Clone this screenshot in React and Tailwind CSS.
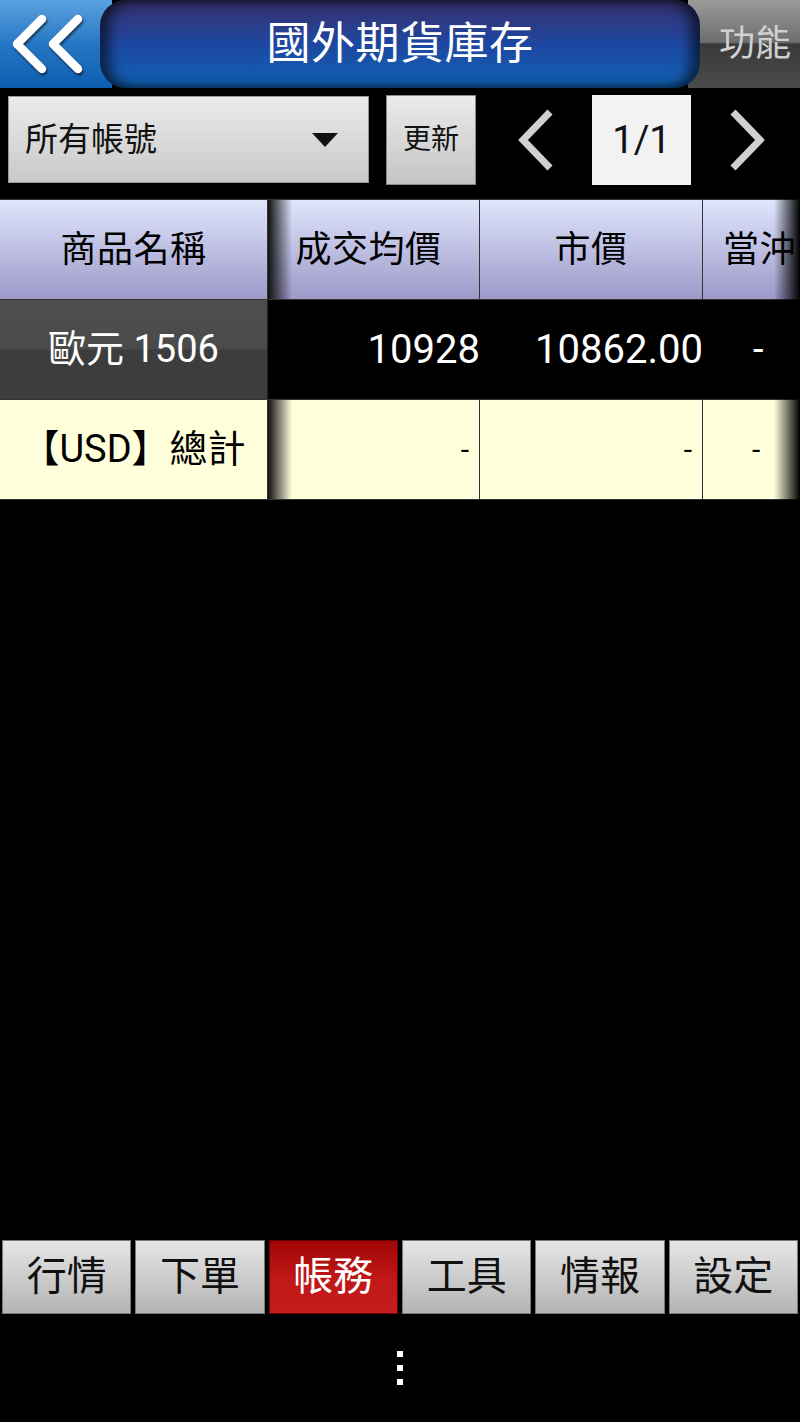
import React from "react";

const FONT = { fontFamily: 'Roboto, "Noto Sans CJK TC", "Noto Sans CJK SC", sans-serif' };

function BackIcon() {
  return (
    <svg width="78" height="62" viewBox="0 0 78 62" className="drop-shadow-[1px_2px_1px_rgba(0,0,0,0.6)]">
      <polyline points="33,6 8,31 33,56" fill="none" stroke="white" strokeWidth="8.5" strokeLinecap="round" strokeLinejoin="round" />
      <polyline points="69,6 44,31 69,56" fill="none" stroke="white" strokeWidth="8.5" strokeLinecap="round" strokeLinejoin="round" />
    </svg>
  );
}

function Chevron({ dir }) {
  return (
    <svg width="40" height="62" viewBox="0 0 40 62">
      {dir === "left" ? (
        <polyline points="34,3 7,31 34,59" fill="none" stroke="#d0d0d0" strokeWidth="7" />
      ) : (
        <polyline points="6,3 33,31 6,59" fill="none" stroke="#d0d0d0" strokeWidth="7" />
      )}
    </svg>
  );
}

function HeaderCell({ children, className = "" }) {
  return (
    <div className={`h-full flex items-center justify-center bg-gradient-to-b from-[#e0e6fc] to-[#9d99c9] text-black text-[36px] tracking-[0.5px] border-r border-[#333] ${className}`}>
      {children}
    </div>
  );
}

export default function App() {
  const tabs = ["行情", "下單", "帳務", "工具", "情報", "設定"];
  return (
    <div className="w-[800px] h-[1422px] bg-black flex flex-col overflow-hidden" style={FONT}>
      {/* Header */}
      <div className="h-[88px] flex shrink-0">
        <div className="w-[112px] shrink-0 bg-gradient-to-b from-[#5aa2df] via-[#2577c4] to-[#0d5db0] flex items-center pl-[9px]">
          <BackIcon />
        </div>
        <div className="relative z-10 flex-1 -mx-[12px] rounded-[26px] bg-gradient-to-b from-[#332f6d] via-[#1c47a0] to-[#0f62b6] flex items-center justify-center shadow-[inset_10px_0_12px_rgba(0,0,0,0.55),inset_-10px_0_12px_rgba(0,0,0,0.55)]">
          <span className="text-white text-[44px] leading-none tracking-[0.5px]">國外期貨庫存</span>
        </div>
        <div className="w-[112px] shrink-0 flex flex-col">
          <div className="flex-1 relative flex items-center justify-end pr-[9px] bg-[linear-gradient(to_bottom,#9a9a9a_0%,#6e6e6e_48%,#3a3a3a_50%,#4a4a4a_100%)]">
            <span className="text-[#d0d0d0] text-[36px] leading-none">功能</span>
          </div>
        </div>
      </div>

      {/* Toolbar */}
      <div className="mt-[5px] h-[93px] flex items-center shrink-0">
        <div className="ml-[8px] w-[361px] h-[87px] bg-gradient-to-b from-[#ebebeb] to-[#c9c9c9] border border-[#999] flex items-center justify-between pl-[16px] pr-[30px]">
          <span className="text-[#111] text-[33px] leading-none">所有帳號</span>
          <svg width="26" height="14" viewBox="0 0 26 14"><polygon points="0,0 26,0 13,14" fill="#111" /></svg>
        </div>
        <div className="ml-[17px] w-[90px] h-[90px] bg-gradient-to-b from-[#ebebeb] to-[#c4c4c4] border border-[#888] flex items-center justify-center">
          <span className="text-[#111] text-[28px] leading-none">更新</span>
        </div>
        <div className="ml-[40px] w-[40px] flex items-center justify-center">
          <Chevron dir="left" />
        </div>
        <div className="ml-[36px] w-[99px] h-[90px] bg-[#f2f2f2] flex items-center justify-center">
          <span className="text-[#111] text-[38px] leading-none">1/1</span>
        </div>
        <div className="ml-[36px] w-[40px] flex items-center justify-center">
          <Chevron dir="right" />
        </div>
      </div>

      {/* Table */}
      <div className="mt-[13px] relative">
        <div className="grid grid-cols-[268px_212px_223px_97px] h-[101px] border-y border-[#333]">
          <HeaderCell>商品名稱</HeaderCell>
          <HeaderCell className="relative pr-[10px]">
            <span>成交均價</span>
            <div className="absolute left-0 top-0 bottom-0 w-[24px] bg-gradient-to-r from-[#111] to-transparent" />
          </HeaderCell>
          <HeaderCell>市價</HeaderCell>
          <HeaderCell className="justify-start pl-[20px] border-r-0 relative">
            <span>當沖</span>
          </HeaderCell>
        </div>
        <div className="grid grid-cols-[268px_212px_223px_97px] h-[100px] border-b border-[#333]">
          <div className="h-full flex items-center justify-center text-white text-[38px] border-r border-[#222] bg-[linear-gradient(to_bottom,#4f4f4f_0%,#4a4a4a_49%,#3d3d3d_51%,#3d3d3d_100%)]">歐元 1506</div>
          <div className="h-full flex items-center justify-end text-white text-[40px]">10928</div>
          <div className="h-full flex items-center justify-end text-white text-[40px]">10862.00</div>
          <div className="h-full flex items-center justify-start pl-[50px] text-white text-[38px]">-</div>
        </div>
        <div className="grid grid-cols-[268px_212px_223px_97px] h-[100px] border-b border-[#333] bg-[#ffffdc]">
          <div className="h-full flex items-center justify-center text-black text-[38px] border-r border-[#333]">【USD】總計</div>
          <div className="relative h-full flex items-center justify-end pr-[10px] text-black text-[30px] border-r border-[#333]">
            <div className="absolute left-0 top-0 bottom-0 w-[24px] bg-gradient-to-r from-[#111] to-transparent" />
            -
          </div>
          <div className="h-full flex items-center justify-end pr-[10px] text-black text-[30px] border-r border-[#333]">-</div>
          <div className="h-full flex items-center justify-start pl-[49px] text-black text-[30px]">-</div>
        </div>
        <div className="absolute right-0 top-0 bottom-0 w-[26px] bg-gradient-to-r from-transparent to-black pointer-events-none" />
      </div>

      <div className="flex-1" />

      {/* Bottom tabs */}
      <div className="flex gap-[4px] px-[2px] h-[74px] shrink-0">
        {tabs.map((t) =>
          t === "帳務" ? (
            <div key={t} className="flex-1 flex items-center justify-center border border-[#6a0000] bg-gradient-to-b from-[#a10606] via-[#c01616] to-[#c41d1d] text-white text-[40px] leading-none">
              {t}
            </div>
          ) : (
            <div key={t} className="flex-1 flex items-center justify-center border border-[#777] bg-gradient-to-b from-[#e6e6e6] to-[#b4b4b4] text-[#111] text-[40px] leading-none">
              {t}
            </div>
          )
        )}
      </div>

      <div className="h-[108px] shrink-0 flex flex-col items-center pt-[37px] gap-[8px]">
        <div className="w-[6px] h-[6px] bg-white" />
        <div className="w-[6px] h-[6px] bg-white" />
        <div className="w-[6px] h-[6px] bg-white" />
      </div>
    </div>
  );
}
